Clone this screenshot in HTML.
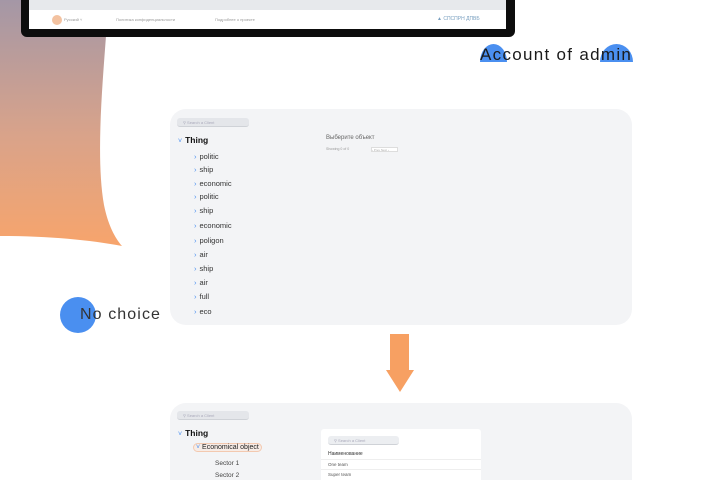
<!DOCTYPE html>
<html><head><meta charset="utf-8"><style>
*{margin:0;padding:0;box-sizing:border-box}
html,body{width:720px;height:480px;overflow:hidden}
body{background:#fff;position:relative;font-family:"Liberation Sans",sans-serif;color:#222}
.abs{position:absolute}
.panel{position:absolute;left:170px;width:462px;background:#f3f4f6;border-radius:16px}
.search{position:absolute;height:9px;background:#e4e6ea;border-radius:3px;border-bottom:1px solid #cfd2d7;font-size:4px;color:#aab;padding:2px 6px}
.item{position:absolute;left:194px;font-size:7.5px;color:#333}
.item b{color:#4a8ff0;font-weight:normal;margin-right:3px}
.thing{position:absolute;left:178px;font-size:8.5px;font-weight:bold;color:#111}
.thing i{color:#4a8ff0;font-style:normal;font-weight:normal;margin-right:3px;font-size:7px}
</style></head><body>
<svg class="abs" style="left:0;top:0" width="720" height="480">
<defs><linearGradient id="g" x1="0" y1="0" x2="0" y2="1"><stop offset="0" stop-color="#a497a6"/><stop offset="0.55" stop-color="#d9a38a"/><stop offset="1" stop-color="#f7a46c"/></linearGradient></defs>
<path d="M0,0 L106,0 L106,36 C102,90 96,160 104,205 C108,225 115,238 122,246 C90,240 50,236 0,236 Z" fill="url(#g)"/>
<rect x="21" y="-10" width="494" height="47" rx="6" fill="#0d0d0d"/>
<rect x="29" y="-5" width="477" height="34" fill="#fff"/>
<rect x="29" y="-5" width="477" height="15" fill="#e7e9ec"/>
<circle cx="57" cy="20" r="5" fill="#f3c2a0"/>
<path d="M480,62 A13.5,18 0 0 1 507,62 Z" fill="#4a8ff0"/>
<path d="M600,62 A16.5,18 0 0 1 633,62 Z" fill="#4a8ff0"/>
<circle cx="78" cy="315" r="18" fill="#4a8ff0"/>
<rect x="390" y="334" width="19" height="37" fill="#f7a062"/>
<path d="M386,370 L414,370 L400,392 Z" fill="#f7a062"/>
</svg>
<div class="abs" style="left:64px;top:17px;font-size:4px;color:#999">Русский ˅</div>
<div class="abs" style="left:116px;top:17px;font-size:4px;color:#999">Политика конфиденциальности</div>
<div class="abs" style="left:215px;top:17px;font-size:4px;color:#999">Подробнее о проекте</div>
<div class="abs" style="left:437px;top:16px;font-size:5px;color:#7aa0c0">▲ СПСПРН ДПВБ</div>
<div class="abs" style="left:480px;top:45px;font-size:17px;color:#1a1a1a;letter-spacing:1.3px">Account of admin</div>
<div class="abs" style="left:80px;top:306px;font-size:16px;color:#333;letter-spacing:1.1px">No choice</div>

<div class="panel" style="top:109px;height:216px"></div>
<div class="search" style="left:177px;top:118px;width:72px">⚲ Search a Client</div>
<div class="thing" style="top:135px"><i>˅</i>Thing</div>
<div class="item" style="top:152px"><b>›</b>politic</div>
<div class="item" style="top:165px"><b>›</b>ship</div>
<div class="item" style="top:179px"><b>›</b>economic</div>
<div class="item" style="top:192px"><b>›</b>politic</div>
<div class="item" style="top:206px"><b>›</b>ship</div>
<div class="item" style="top:221px"><b>›</b>economic</div>
<div class="item" style="top:236px"><b>›</b>poligon</div>
<div class="item" style="top:250px"><b>›</b>air</div>
<div class="item" style="top:264px"><b>›</b>ship</div>
<div class="item" style="top:278px"><b>›</b>air</div>
<div class="item" style="top:292px"><b>›</b>full</div>
<div class="item" style="top:307px"><b>›</b>eco</div>
<div class="abs" style="left:326px;top:135px;font-size:6px;color:#666">Выберите объект</div>
<div class="abs" style="left:326px;top:147px;font-size:3.5px;color:#999">Showing 0 of 0</div>
<div class="abs" style="left:371px;top:147px;width:27px;height:5px;border:1px solid #ddd;background:#fff;font-size:3px;color:#aaa">‹ Prev Next ›</div>

<div class="panel" style="top:403px;height:100px"></div>
<div class="search" style="left:177px;top:411px;width:72px">⚲ Search a Client</div>
<div class="thing" style="top:428px"><i>˅</i>Thing</div>
<div class="abs" style="left:193px;top:443px;font-size:7px;color:#222;border:1px solid #f3c9b0;border-radius:6px;background:#f7ece6;padding:0 2px"><span style="color:#4a8ff0">˅</span> Economical object</div>
<div class="abs" style="left:215px;top:460px;font-size:6.5px;color:#444">Sector 1</div>
<div class="abs" style="left:215px;top:472px;font-size:6.5px;color:#444">Sector 2</div>
<div class="abs" style="left:321px;top:429px;width:160px;height:60px;background:#fff;border-radius:3px"></div>
<div class="search" style="left:328px;top:436px;width:71px;background:#eceef1">⚲ Search a Client</div>
<div class="abs" style="left:328px;top:451px;font-size:5px;color:#333">Наименование</div>
<div class="abs" style="left:321px;top:459px;width:160px;border-top:1px solid #eee"></div>
<div class="abs" style="left:328px;top:462px;font-size:4.5px;color:#555">One team</div>
<div class="abs" style="left:321px;top:469px;width:160px;border-top:1px solid #eee"></div>
<div class="abs" style="left:328px;top:472px;font-size:4.5px;color:#555">Super team</div>
</body></html>
